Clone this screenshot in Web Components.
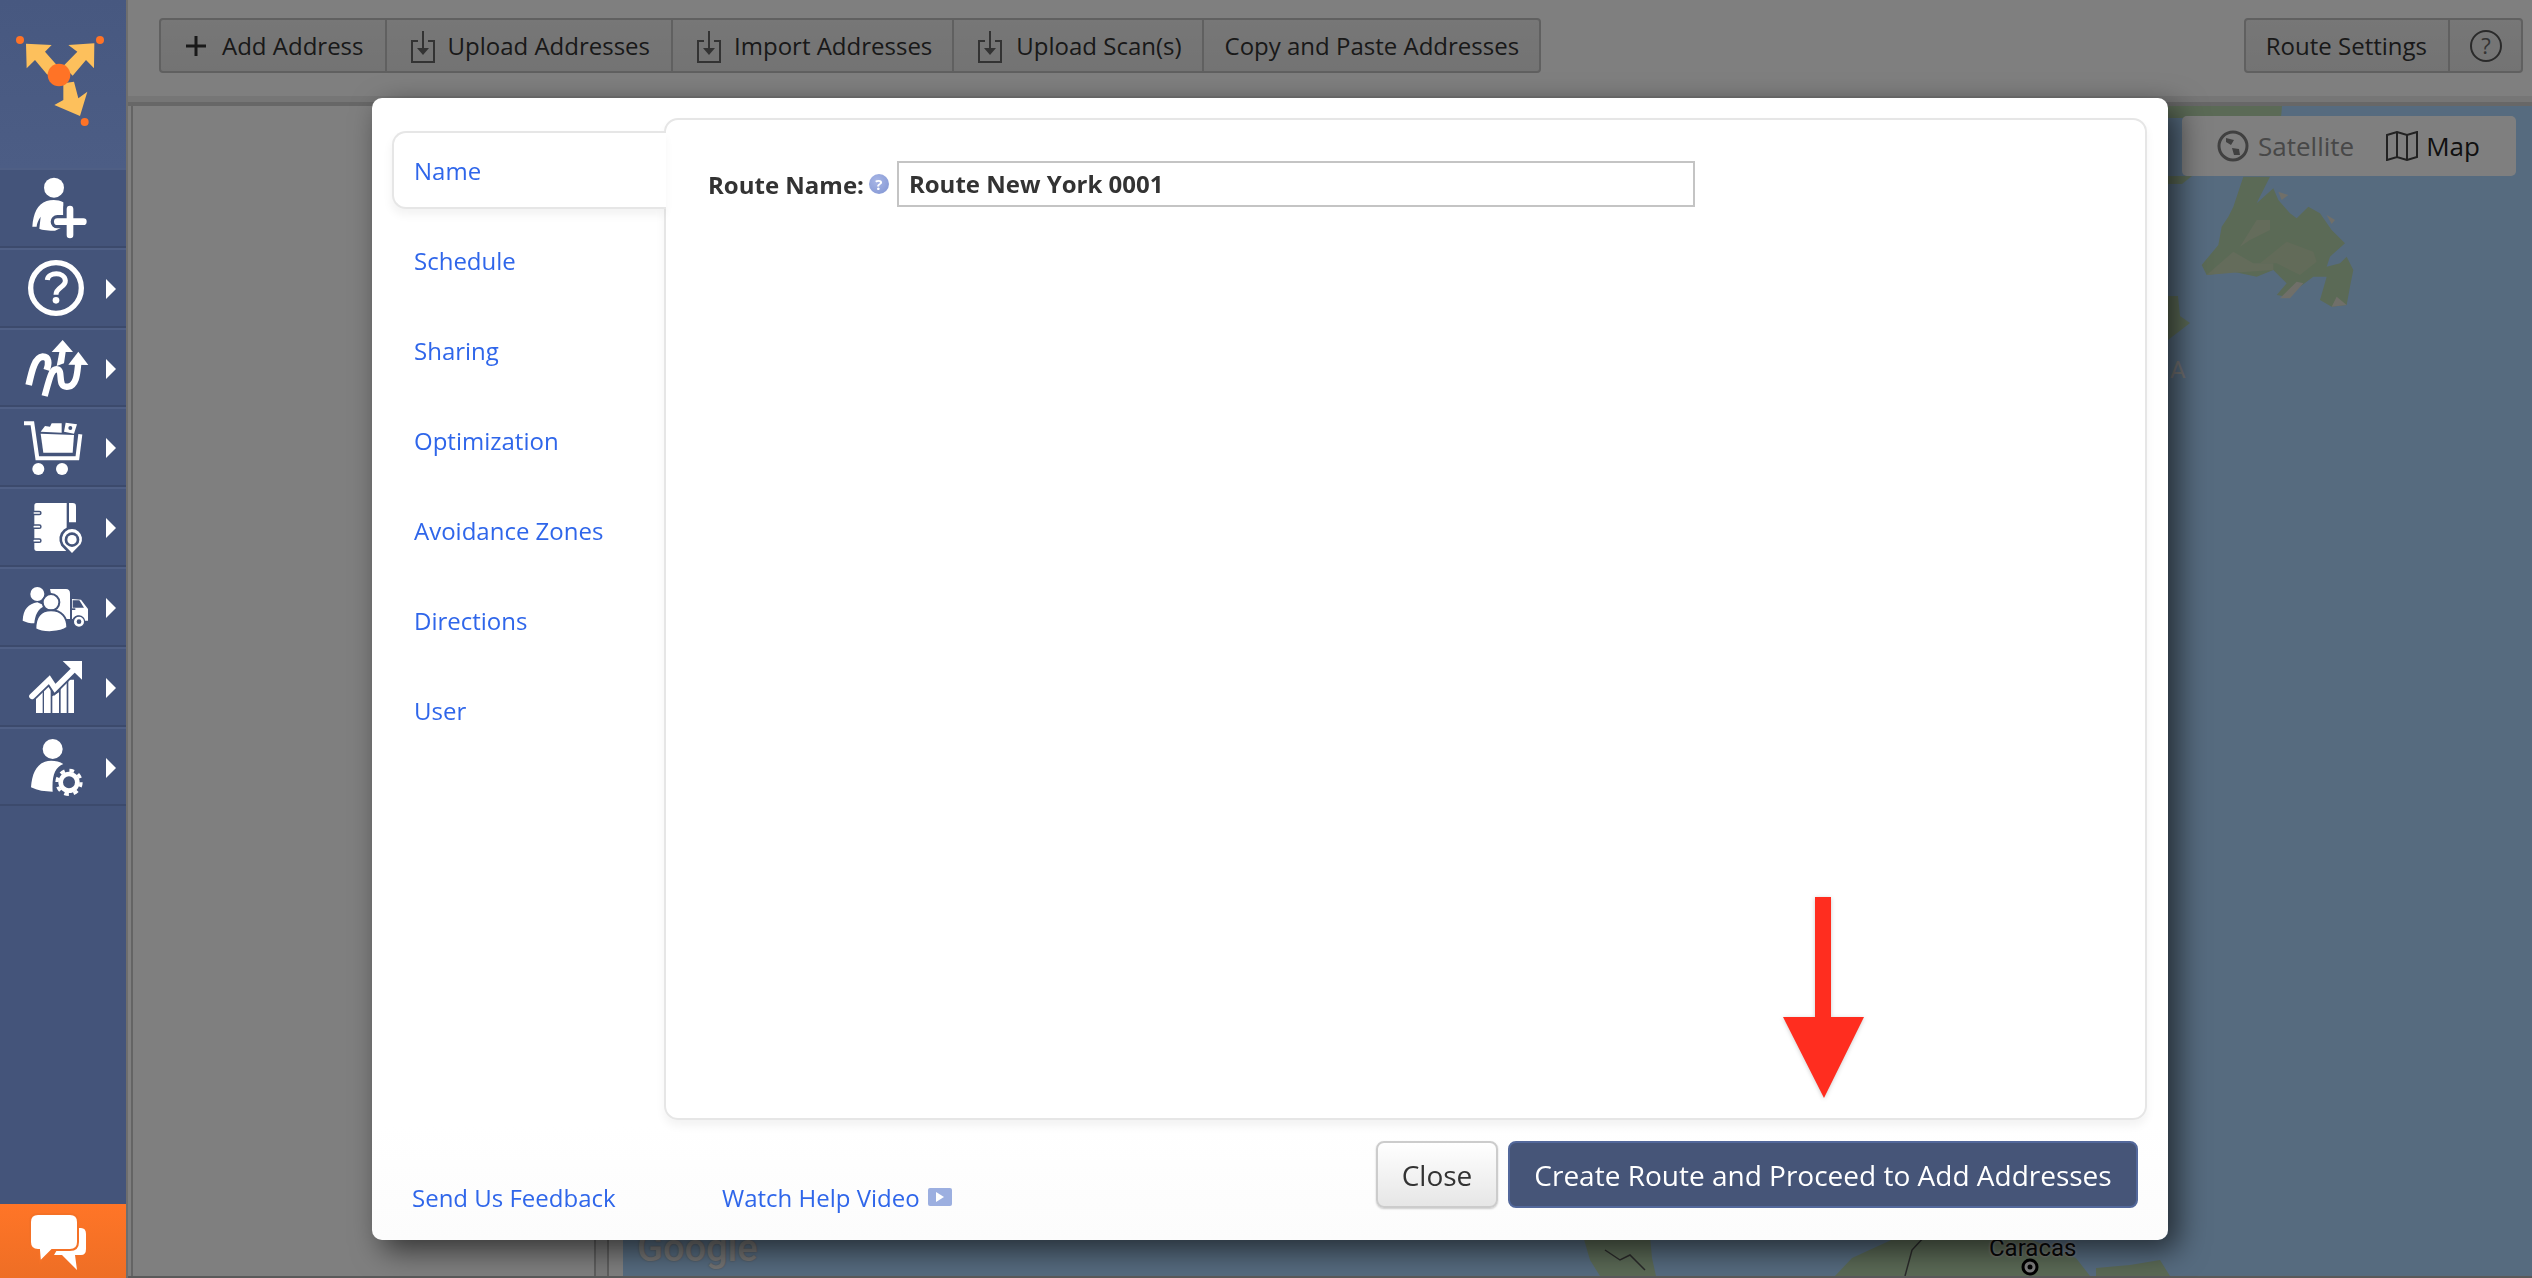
<!DOCTYPE html>
<html>
<head>
<meta charset="utf-8">
<title>Route Settings</title>
<style>
html, body { margin: 0; height: 100%; }
body {
	width: 2532px;
	height: 1278px;
	overflow: hidden;
	display: grid;
	grid-template-columns: 126px 1fr;
	font-family: "Open Sans", "Liberation Sans", sans-serif;
	color: #333;
}
svg { display: block; }
</style>
</head>
<body>

<rm-sidebar>
	<rm-nav-item>
		<svg width="126" height="80" viewBox="0 504 378 240" fill="#fff">
			<circle cx="162" cy="563" r="30"/>
			<path d="M97 680C100 640 112 612 140 603C155 598 175 598 190 607L190 680L165 692C150 692 125 690 118 686L122 650C115 660 110 672 110 680Z"/>
			<path d="M172 665H250M210 625V706" stroke="#44547a" stroke-width="40" stroke-linecap="round" fill="none"/>
			<path d="M172 665H250M210 627V705" stroke="#fff" stroke-width="20" stroke-linecap="round" fill="none"/>
		</svg>
	</rm-nav-item>
	<rm-nav-item caret>
		<svg width="126" height="80" viewBox="0 744 378 240" fill="#fff">
			<circle cx="168" cy="864" r="76" fill="none" stroke="#fff" stroke-width="16"/>
			<path d="M142 840C144 816 194 814 196 842C197 862 168 862 168 884" fill="none" stroke="#fff" stroke-width="15"/>
			<circle cx="168" cy="901" r="10"/>
		</svg>
	</rm-nav-item>
	<rm-nav-item caret>
		<svg width="126" height="80" viewBox="0 984 378 240" fill="#fff">
			<path d="M86 1155C96 1110 105 1072 128 1070C148 1070 147 1090 140 1110" fill="none" stroke="#fff" stroke-width="20"/>
			<path d="M134 1188C150 1130 155 1105 172 1108C192 1112 168 1165 205 1160C232 1156 232 1112 235 1088" fill="none" stroke="#fff" stroke-width="19"/>
			<path d="M205 1094L235 1055L265 1095Z"/>
			<path d="M155 1056L188 1020L219 1056L197 1056L192 1090L170 1098L178 1056Z"/>
		</svg>
	</rm-nav-item>
	<rm-nav-item caret>
		<svg width="126" height="80" viewBox="0 78 378 240" fill="#fff">
			<path d="M72 127H97L112 232H232L241 160" fill="none" stroke="#fff" stroke-width="12"/>
			<path d="M122 158L222 162L218 215L130 215Z"/>
			<path d="M122 152L135 135L150 137L155 127L185 127L185 155Z"/>
			<path fill-rule="evenodd" d="M197 125L231 130L222 158L192 152ZM211 135A6 6 0 1 0 211 147A6 6 0 1 0 211 135Z"/>
			<circle cx="115" cy="264" r="18"/>
			<circle cx="186" cy="264" r="18"/>
		</svg>
	</rm-nav-item>
	<rm-nav-item caret>
		<svg width="126" height="80" viewBox="0 144 378 240" fill="#fff">
			<path d="M110 192H200V336H110Q103 336 103 328V200Q103 192 110 192Z"/>
			<path d="M207 192H218Q228 192 228 202V250H207Z"/>
			<path d="M103 222H118M103 263H118M103 305H118" stroke="#44547a" stroke-width="14" stroke-linecap="round"/>
			<path d="M103 222H118M103 263H118M103 305H118" stroke="#fff" stroke-width="5" stroke-linecap="round" fill="none"/>
			<path d="M216 348L187 318A34 34 0 1 1 245 318Z" stroke="#44547a" stroke-width="8"/>
			<circle cx="216" cy="302" r="22" fill="#44547a"/>
			<circle cx="216" cy="302" r="14"/>
		</svg>
	</rm-nav-item>
	<rm-nav-item caret>
		<svg width="126" height="80" viewBox="0 384 378 240" fill="#fff">
			<path d="M150 450H198Q210 450 210 464V540H170Z"/>
			<path d="M216 480L243 482L264 510V545H250C245 525 225 525 218 540H216Z"/>
			<path d="M218 484H238L252 506H218Z" fill="#44547a"/>
			<rect x="216" y="508" width="10" height="5" fill="#44547a"/>
			<circle cx="237" cy="548" r="17" stroke="#44547a" stroke-width="4"/>
			<circle cx="237" cy="548" r="7" fill="#44547a"/>
			<circle cx="112" cy="465" r="21"/>
			<path d="M68 545C70 510 85 495 112 490L135 500C112 510 105 530 103 553C90 553 78 550 68 545Z"/>
			<circle cx="153" cy="490" r="25" stroke="#44547a" stroke-width="6"/>
			<path d="M106 570C106 530 125 514 153 514C185 514 202 535 202 566C180 582 130 584 106 570Z" stroke="#44547a" stroke-width="6"/>
		</svg>
	</rm-nav-item>
	<rm-nav-item caret>
		<svg width="126" height="80" viewBox="0 624 378 240" fill="#fff">
			<path d="M108 775L128 757V822H108ZM132 752L152 735V822H132ZM157 772L177 760V822H157ZM182 745L200 728V822H182ZM205 722H222V822H205Z"/>
			<path d="M96 772L148 722L165 748L218 695" fill="none" stroke="#44547a" stroke-width="28" stroke-linecap="round"/>
			<path d="M96 772L148 722L165 748L218 695" fill="none" stroke="#fff" stroke-width="17" stroke-linecap="round"/>
			<path d="M188 666H246V722Z"/>
		</svg>
	</rm-nav-item>
	<rm-nav-item caret>
		<svg width="126" height="80" viewBox="0 864 378 240" fill="#fff">
			<circle cx="158" cy="930" r="30"/>
			<path d="M93 1045C96 1005 108 978 135 968C150 963 175 965 190 975C165 985 155 1010 158 1058C135 1058 112 1055 93 1045Z"/>
			<circle cx="207" cy="1030" r="38" fill="#44547a"/>
			<circle cx="207" cy="1030" r="36" fill="none" stroke="#fff" stroke-width="10" stroke-dasharray="14 14.3"/>
			<circle cx="207" cy="1030" r="25" fill="none" stroke="#fff" stroke-width="14"/>
		</svg>
	</rm-nav-item>
</rm-sidebar>

<rm-main>
	<rm-toolbar>
		<rm-button-group>
			<rm-tool-button style="--pl:25px;--pr:22px;--gap:16px"><rm-glyph slot="icon" kind="plus"></rm-glyph>Add Address</rm-tool-button>
			<rm-tool-button style="--gap:12px;--pr:21px"><rm-glyph slot="icon" kind="tray"></rm-glyph>Upload Addresses</rm-tool-button>
			<rm-tool-button><rm-glyph slot="icon" kind="tray"></rm-glyph>Import Addresses</rm-tool-button>
			<rm-tool-button style="--gap:14px"><rm-glyph slot="icon" kind="tray"></rm-glyph>Upload Scan(s)</rm-tool-button>
			<rm-tool-button style="--pl:21px;--pr:20px;--gap:0px;border-right:0">Copy and Paste Addresses</rm-tool-button>
		</rm-button-group>
		<rm-button-group>
			<rm-tool-button style="--pl:20px;--pr:21px;--gap:0px">Route Settings</rm-tool-button>
			<rm-tool-button style="--pl:20px;--pr:19px;--gap:0px;border-right:0"><rm-glyph slot="icon" kind="help"></rm-glyph></rm-tool-button>
		</rm-button-group>
	</rm-toolbar>
	<rm-workspace>
		<rm-map></rm-map>
	</rm-workspace>
</rm-main>

<rm-modal>
	<rm-tab slot="tabs" active>Name</rm-tab>
	<rm-tab slot="tabs">Schedule</rm-tab>
	<rm-tab slot="tabs">Sharing</rm-tab>
	<rm-tab slot="tabs">Optimization</rm-tab>
	<rm-tab slot="tabs">Avoidance Zones</rm-tab>
	<rm-tab slot="tabs">Directions</rm-tab>
	<rm-tab slot="tabs">User</rm-tab>
	<rm-name-field label="Route Name:" value="Route New York 0001"></rm-name-field>
</rm-modal>

<script>
class Sidebar extends HTMLElement {
	constructor() {
		super();
		this.attachShadow({ mode: 'open' });
		this.shadowRoot.innerHTML = `
		<style>
		:host {
			display: flex;
			flex-direction: column;
			width: 126px;
			height: 1278px;
			background: #44547a;
		}
		.logo {
			height: 168px;
			background: linear-gradient(#475880, #4c5d85);
		}
		nav { flex: 1; }
		.chat {
			height: 74px;
			background: linear-gradient(#ff7527, #ee6e25);
		}
		</style>
		<div class="logo">
			<svg width="126" height="168" viewBox="0 0 378 504">
				<g fill="#fdc05c">
					<path d="M78 131L155 135L135 155L172 197L142 224L105 180L80 205Z"/>
					<path d="M283 130L282 205L258 180L218 227L190 198L232 155L205 135Z"/>
					<path d="M190 250L222 245L235 295L262 275L240 348L163 315L190 300Z"/>
				</g>
				<g fill="#ff7326">
					<circle cx="177" cy="225" r="34"/>
					<circle cx="60" cy="120" r="12"/>
					<circle cx="300" cy="120" r="12"/>
					<circle cx="254" cy="366" r="12"/>
				</g>
			</svg>
		</div>
		<nav><slot></slot></nav>
		<div class="chat">
			<svg width="126" height="74" viewBox="0 0 126 74" fill="#fff">
				<path d="M70 24H81Q86 24 86 30V45Q86 51 81 51H75L77 66L62 51H54Z"/>
				<path d="M38 10H70Q78 10 78 18V38Q78 46 70 46H52L40 58L39 46H38Q30 46 30 38V18Q30 10 38 10Z" stroke="#f57126" stroke-width="2"/>
			</svg>
		</div>
		`;
	}
}

class NavItem extends HTMLElement {
	constructor() {
		super();
		this.attachShadow({ mode: 'open' });
		this.shadowRoot.innerHTML = `
		<style>
		:host {
			display: block;
			position: relative;
			height: 79.8px;
			box-sizing: border-box;
			border-top: 2px solid #4f5f85;
			border-bottom: 2px solid #3c4a6c;
			overflow: hidden;
		}
		.wrap { margin-top: -2px; }
		.caret {
			position: absolute;
			left: 106px;
			top: 29px;
			border-left: 10px solid #fff;
			border-top: 10px solid transparent;
			border-bottom: 10px solid transparent;
			display: none;
		}
		:host([caret]) .caret { display: block; }
		</style>
		<div class="wrap"><slot></slot></div>
		<div class="caret"></div>
		`;
	}
}

class Main extends HTMLElement {
	constructor() {
		super();
		this.attachShadow({ mode: 'open' });
		this.shadowRoot.innerHTML = `
		<style>
		:host {
			display: flex;
			flex-direction: column;
			position: relative;
			height: 1278px;
			padding-left: 2px;
			background: linear-gradient(90deg, #dcdcdc 2px, #fff 2px);
			overflow: hidden;
		}
		.backdrop {
			position: absolute;
			inset: 0;
			background: rgba(0, 0, 0, 0.5);
		}
		</style>
		<slot></slot>
		<div class="backdrop"></div>
		`;
	}
}

class Toolbar extends HTMLElement {
	constructor() {
		super();
		this.attachShadow({ mode: 'open' });
		this.shadowRoot.innerHTML = `
		<style>
		:host {
			display: flex;
			justify-content: space-between;
			align-items: flex-start;
			padding: 18px 9px 0 31px;
			box-sizing: border-box;
			border-bottom: 6px solid #ededed;
			height: 102px;
		}
		</style>
		<slot></slot>
		`;
	}
}

class ButtonGroup extends HTMLElement {
	constructor() {
		super();
		this.attachShadow({ mode: 'open' });
		this.shadowRoot.innerHTML = `
		<style>
		:host {
			display: flex;
			height: 55px;
			box-sizing: border-box;
			border: 2px solid #c0c0c0;
			border-radius: 4px;
			background: linear-gradient(#eeeeee, #e7e7e7);
		}
		</style>
		<slot></slot>
		`;
	}
}

class ToolButton extends HTMLElement {
	constructor() {
		super();
		this.attachShadow({ mode: 'open' });
		this.shadowRoot.innerHTML = `
		<style>
		:host {
			display: flex;
			align-items: center;
			padding: 0 var(--pr, 20px) 0 var(--pl, 24px);
			gap: var(--gap, 13px);
			border-right: 2px solid #c0c0c0;
			font: 24px "Open Sans", sans-serif;
			color: #333;
			white-space: nowrap;
		}
		</style>
		<slot name="icon"></slot>
		<slot></slot>
		`;
	}
}

class Glyph extends HTMLElement {
	constructor() {
		super();
		this.attachShadow({ mode: 'open' });
		const kind = this.getAttribute('kind');
		const shapes = {
			plus: `<svg width="20" height="20" viewBox="0 0 20 20"><path d="M10 0V20M0 10H20" stroke="#333" stroke-width="3"/></svg>`,
			tray: `<svg width="24" height="32" viewBox="0 0 24 32" style="margin-top:3px" fill="none" stroke="#666" stroke-width="2"><path d="M7 10H1V31H23V10H17"/><path d="M12 0V18"/><path d="M6 17H18L12 24Z" fill="#666" stroke="none"/></svg>`,
			help: `<svg width="32" height="32" viewBox="0 0 32 32"><circle cx="16" cy="16" r="15" fill="none" stroke="#555" stroke-width="2"/><text x="16" y="24" font-family="Open Sans" font-size="22" fill="#666" text-anchor="middle">?</text></svg>`
		};
		this.shadowRoot.innerHTML = `
		<style>
		:host { display: block; }
		svg { display: block; }
		</style>
		${shapes[kind]}
		`;
	}
}

class Workspace extends HTMLElement {
	constructor() {
		super();
		this.attachShadow({ mode: 'open' });
		this.shadowRoot.innerHTML = `
		<style>
		:host {
			display: flex;
			flex: 1;
			min-height: 0;
			border-top: 4px solid #cfcfcf;
			border-bottom: 2px solid #b4b4b4;
			padding-left: 3px;
		}
		.list {
			width: 461px;
			border-left: 2px solid #c8c8c8;
		}
		.splitter {
			width: 11px;
			border-left: 2px solid #bdbdbd;
			border-right: 2px solid #bdbdbd;
			background: #f2f2f2;
		}
		.gap { width: 14px; }
		</style>
		<div class="list"></div>
		<div class="splitter"></div>
		<div class="gap"></div>
		<slot></slot>
		`;
	}
}

class RouteMap extends HTMLElement {
	constructor() {
		super();
		this.attachShadow({ mode: 'open' });
		this.shadowRoot.innerHTML = `
		<style>
		:host {
			display: block;
			flex: 1;
			position: relative;
			overflow: hidden;
			background: #acd6ff;
			font-family: Roboto, "Open Sans", sans-serif;
		}
		svg.land { position: absolute; left: 0; top: 0; }
		.label {
			position: absolute;
			white-space: nowrap;
			color: #111;
			text-shadow: 0 0 3px #fff, 0 0 3px #fff;
		}
		.switch {
			position: absolute;
			top: 10px;
			right: 16px;
			width: 334px;
			height: 60px;
			display: flex;
			align-items: center;
			box-sizing: border-box;
			padding-left: 35px;
			background: #fff;
			border-radius: 5px;
			font: 26px "Open Sans", sans-serif;
		}
		.switch span { display: flex; align-items: center; }
		.sat { color: #909090; gap: 9px; }
		.road { color: #222; gap: 8px; margin-left: 32px; }
		.google {
			position: absolute;
			left: 14px;
			top: 1120px;
			font: 500 38px Roboto, sans-serif;
			color: #e9e9e9;
			text-shadow: 0 0 2px #999;
		}
		</style>
		<svg class="land" width="1909" height="1170" viewBox="623 106 1909 1170">
			<g fill="#b6d4ac">
				<path d="M2160 106H2282L2281 118H2160ZM2160 176H2192L2182 184H2160Z"/>
				<path d="M2160 296H2178L2180 316L2190 323L2168 340H2160Z"/>
				<path d="M1583 1236H1650L1652 1258L1656 1276H1600L1590 1260Z"/>
				<path d="M1835 1276L1852 1258L1900 1236H2022L2076 1258L2090 1276Z"/>
				<path d="M2096 1268L2130 1265L2160 1260L2170 1276H2096Z"/>
			</g>
			<g transform="translate(2100 0) scale(.33333)">
				<path fill="#b6d4ac" d="M430 530H510L470 610L520 565L535 600L570 640L590 655L625 620L660 640L695 690L735 730L690 770L680 800L720 790L740 770L760 810L750 860L740 915L695 920L660 900L680 830L640 830L600 860L560 890L530 885L560 850L540 830L520 810L470 830L400 815L320 825L305 795L355 735L365 680L385 650L400 620Z"/>
				<path fill="#c8d8b6" d="M420 740L470 660L510 660L510 690L450 720Z"/>
				<path fill="#c8d8b6" d="M320 825L400 755L460 790L520 790L520 810L400 818Z"/>
				<path fill="#c4d6b2" d="M480 790L560 725L640 755L650 785L600 825L530 790Z"/>
				<path fill="#e0dfd2" d="M540 895L590 845L610 850L570 895ZM695 920L710 890L740 915ZM535 575L565 585L545 600ZM680 645L705 660L695 672Z"/>
			</g>
			<path d="M1605 1250L1620 1260L1630 1255L1645 1270M1925 1236L1912 1250L1905 1276" fill="none" stroke="#555" stroke-width="1.5"/>
		</svg>
		<div class="label" style="left:1366px;top:1128px;font-size:24px">Caracas</div>
		<svg style="position:absolute;left:1398px;top:1152px" width="18" height="18" viewBox="0 0 18 18"><circle cx="9" cy="9" r="7" fill="#fff" stroke="#000" stroke-width="3"/><circle cx="9" cy="9" r="2.5"/></svg>
		<div class="label" style="left:1547px;top:250px;font-size:24px;color:#e8e8e8;text-shadow:none">A</div>
		<div class="google">Google</div>
		<div class="switch">
			<span class="sat">
				<svg width="32" height="32" viewBox="0 0 32 32"><circle cx="16" cy="16" r="14" fill="none" stroke="#808080" stroke-width="3"/><path d="M9 8L17 10L14 15L9 12ZM15 18L22 19L23 25L17 25Z" fill="#808080"/></svg>
				Satellite
			</span>
			<span class="road">
				<svg width="32" height="30" viewBox="0 0 32 30" fill="none" stroke="#444" stroke-width="2"><path d="M1 4L11 1L21 4L31 1V26L21 29L11 26L1 29ZM11 1V26M21 4V29"/></svg>
				Map
			</span>
		</div>
		`;
	}
}

class Modal extends HTMLElement {
	constructor() {
		super();
		this.attachShadow({ mode: 'open' });
		this.shadowRoot.innerHTML = `
		<style>
		:host {
			position: fixed;
			left: 372px;
			top: 98px;
			width: 1796px;
			height: 1142px;
			box-sizing: border-box;
			display: flex;
			flex-direction: column;
			padding: 20px 21px 0 20px;
			background: linear-gradient(#fff 90%, #fcfcfc);
			border-radius: 10px;
			box-shadow: 10px 10px 30px rgba(0, 0, 0, 0.6);
			font: 24px "Open Sans", sans-serif;
		}
		.body { display: flex; height: 1002px; }
		.tabs {
			display: flex;
			flex-direction: column;
			gap: 12px;
			width: 272px;
			padding-top: 13px;
			position: relative;
			z-index: 1;
		}
		.panel {
			flex: 1;
			box-sizing: border-box;
			padding: 41px 42px;
			border: 2px solid #e6e6e6;
			border-radius: 14px;
			box-shadow: 0 6px 10px rgba(0, 0, 0, 0.05);
		}
		.foot {
			display: flex;
			flex: 1;
			padding: 21px 9px 0 20px;
			align-items: flex-start;
		}
		a { color: #2f66ea; text-decoration: none; }
		.links {
			display: flex;
			align-items: center;
			gap: 8px;
			height: 32px;
			margin-top: 40px;
		}
		.send { width: 302px; }
		.video {
			display: inline-flex;
			width: 24px;
			height: 18px;
			background: #9cafe0;
			border-radius: 2px;
			align-items: center;
			justify-content: center;
		}
		.video i {
			border-left: 8px solid #fff;
			border-top: 5px solid transparent;
			border-bottom: 5px solid transparent;
		}
		.actions { margin-left: auto; display: flex; gap: 10px; }
		button {
			height: 67px;
			box-sizing: border-box;
			padding: 0;
			font: 28px "Open Sans", sans-serif;
			border-radius: 8px;
			white-space: nowrap;
		}
		.close {
			width: 122px;
			color: #333;
			border: 2px solid #ccc;
			background: linear-gradient(#fff, #e6e6e6);
			box-shadow: 0 1px 2px rgba(0, 0, 0, 0.2);
		}
		.create {
			width: 630px;
			color: #fff;
			border: 2px solid #53689b;
			background: #465578;
		}
		.arrow {
			position: absolute;
			left: 1411px;
			top: 799px;
		}
		</style>
		<div class="body">
			<div class="tabs"><slot name="tabs"></slot></div>
			<div class="panel"><slot></slot></div>
		</div>
		<div class="foot">
			<div class="links">
				<a class="send" href="#">Send Us Feedback</a>
				<a href="#">Watch Help Video</a>
				<span class="video"><i></i></span>
			</div>
			<div class="actions">
				<button class="close">Close</button>
				<button class="create">Create Route and Proceed to Add Addresses</button>
			</div>
		</div>
		<svg class="arrow" width="82" height="202" viewBox="0 0 82 202" style="filter:drop-shadow(0 1px 2px rgba(0,0,0,.2))">
			<path d="M32 0H48V120H81L41 201L0 120H32Z" fill="#ff2d1f"/>
		</svg>
		`;
	}
}

class Tab extends HTMLElement {
	constructor() {
		super();
		this.attachShadow({ mode: 'open' });
		this.shadowRoot.innerHTML = `
		<style>
		:host {
			display: flex;
			align-items: center;
			height: 78px;
			box-sizing: border-box;
			padding-left: 20px;
			color: #2f66ea;
			border: 2px solid transparent;
			border-right: 0;
		}
		:host([active]) {
			background: #fff;
			margin-right: -2px;
			border-color: #e6e6e6;
			border-radius: 14px 0 0 14px;
			box-shadow: -1px 6px 10px rgba(0, 0, 0, 0.05);
		}
		</style>
		<slot></slot>
		`;
	}
}

class NameField extends HTMLElement {
	constructor() {
		super();
		this.attachShadow({ mode: 'open' });
		this.shadowRoot.innerHTML = `
		<style>
		:host {
			display: flex;
			align-items: center;
			font: bold 24px "Open Sans", sans-serif;
			color: #333;
		}
		.hint {
			flex: none;
			width: 20px;
			height: 20px;
			margin: 0 8px 0 5px;
			border-radius: 50%;
			background: radial-gradient(circle at 40% 35%, #a9b7e6, #7f93d2);
			color: #fff;
			font-size: 15px;
			line-height: 20px;
			text-align: center;
		}
		.box {
			width: 798px;
			height: 46px;
			box-sizing: border-box;
			border: 2px solid #c4c4c4;
			padding-left: 10px;
			line-height: 42px;
		}
		</style>
		<span>${this.getAttribute('label')}</span>
		<span class="hint">?</span>
		<span class="box">${this.getAttribute('value')}</span>
		`;
	}
}

customElements.define('rm-sidebar', Sidebar);
customElements.define('rm-nav-item', NavItem);
customElements.define('rm-main', Main);
customElements.define('rm-toolbar', Toolbar);
customElements.define('rm-button-group', ButtonGroup);
customElements.define('rm-tool-button', ToolButton);
customElements.define('rm-glyph', Glyph);
customElements.define('rm-workspace', Workspace);
customElements.define('rm-map', RouteMap);
customElements.define('rm-modal', Modal);
customElements.define('rm-tab', Tab);
customElements.define('rm-name-field', NameField);
</script>
</body>
</html>
